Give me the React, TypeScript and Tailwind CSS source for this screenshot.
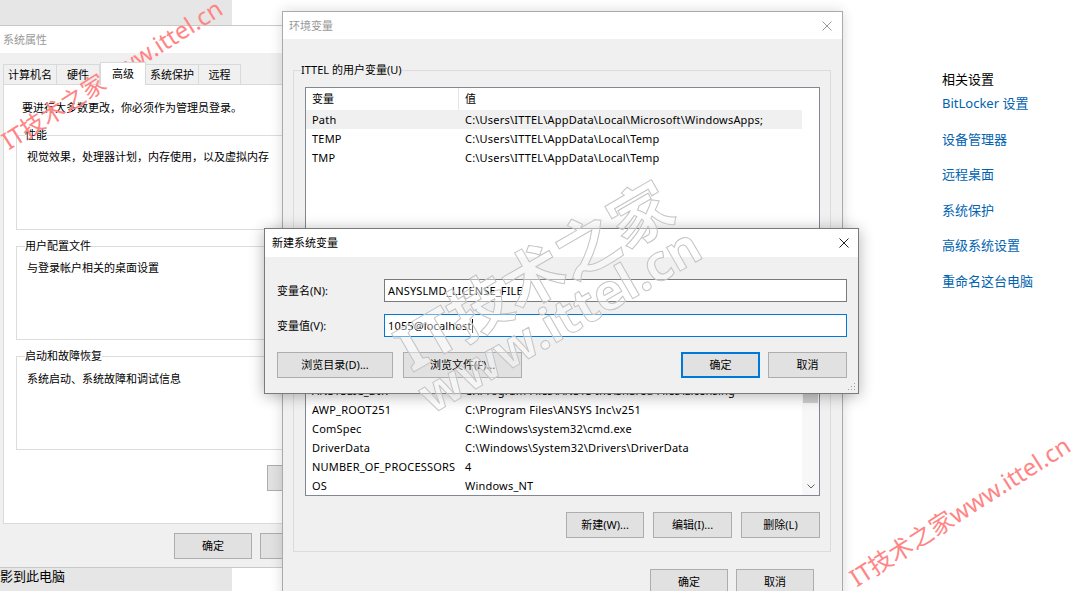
import React from "react";

function XIcon({ color = "#000" }: { color?: string }) {
  return (
    <svg width="10" height="10" viewBox="0 0 10 10">
      <path d="M0.5 0.5 L9.5 9.5 M9.5 0.5 L0.5 9.5" stroke={color} strokeWidth="1" fill="none" />
    </svg>
  );
}

function Btn({ children, className = "", def = false }: { children?: React.ReactNode; className?: string; def?: boolean }) {
  return (
    <div
      className={
        "h-[26px] shrink-0 flex items-center justify-center bg-[#e1e1e1] border whitespace-nowrap " +
        (def ? "border-[#0078d7] shadow-[inset_0_0_0_1px_#0078d7] " : "border-[#adadad] ") +
        className
      }
    >
      {children}
    </div>
  );
}

const links = ["BitLocker 设置", "设备管理器", "远程桌面", "系统保护", "高级系统设置", "重命名这台电脑"];

const userVars = [
  ["Path", "C:\\Users\\ITTEL\\AppData\\Local\\Microsoft\\WindowsApps;"],
  ["TEMP", "C:\\Users\\ITTEL\\AppData\\Local\\Temp"],
  ["TMP", "C:\\Users\\ITTEL\\AppData\\Local\\Temp"],
];

const sysVars = [
  ["ANSYS251_DIR", "C:\\Program Files\\ANSYS Inc\\v251\\ANSYS"],
  ["ANSYSLIC_DIR", "C:\\Program Files\\ANSYS Inc\\Shared Files\\Licensing"],
  ["AWP_ROOT251", "C:\\Program Files\\ANSYS Inc\\v251"],
  ["ComSpec", "C:\\Windows\\system32\\cmd.exe"],
  ["DriverData", "C:\\Windows\\System32\\Drivers\\DriverData"],
  ["NUMBER_OF_PROCESSORS", "4"],
  ["OS", "Windows_NT"],
];

export default function App() {
  return (
    <div className="relative w-[1074px] h-[591px] overflow-hidden bg-white text-[11px] leading-[16px] text-black font-['Noto_Sans','Noto_Sans_CJK_SC',sans-serif]">
      {/* underlying settings page */}
      <div className="absolute inset-0 flex">
        <div className="w-[232px] h-full bg-[#e6e6e6] flex flex-col justify-end pb-[6px]">
          <span className="text-[13px] leading-[18px] whitespace-nowrap">影到此电脑</span>
        </div>
        <div className="flex-1 pl-[710px] pt-[71px] text-[13px] leading-[16px] whitespace-nowrap">
          <div>相关设置</div>
          <div className="mt-[8px] flex flex-col gap-[19.5px] text-[#0063b1]">
            {links.map((l) => (
              <span key={l}>{l}</span>
            ))}
          </div>
        </div>
      </div>

      {/* 系统属性 window */}
      <div className="absolute left-0 top-[25px] w-[432px] h-[543px] flex flex-col border-t border-b border-[#c9c9c9] bg-[#f0f0f0]">
        <div className="h-[27px] shrink-0 bg-white flex items-center pl-[3px] text-[#999]">系统属性</div>
        <div className="flex-1 flex flex-col px-[3px] pt-[9px]">
          <div className="h-[22px] flex items-end">
            <div className="w-[54px] h-[20px] flex items-center justify-center border border-b-0 border-[#d9d9d9]">计算机名</div>
            <div className="w-[43px] h-[20px] flex items-center justify-center border border-b-0 border-l-0 border-[#d9d9d9]">硬件</div>
            <div className="relative top-[1px] z-10 w-[46px] h-[23px] flex items-center justify-center border border-b-0 border-[#d9d9d9] bg-white">高级</div>
            <div className="w-[53px] h-[20px] flex items-center justify-center border border-b-0 border-l-0 border-[#d9d9d9]">系统保护</div>
            <div className="w-[42px] h-[20px] flex items-center justify-center border border-b-0 border-l-0 border-[#d9d9d9]">远程</div>
          </div>
          <div className="h-[440px] bg-white border border-[#d9d9d9] flex flex-col px-[12px] pt-[15px]">
            <div className="ml-[6px] whitespace-nowrap">要进行大多数更改，你必须作为管理员登录。</div>
            <fieldset className="mt-[11px] border border-[#dcdcdc] p-0 min-w-0">
              <legend className="ml-[8px] px-0 leading-[16px]">性能</legend>
              <div className="h-[86px] pt-[6px] pl-[10px] whitespace-nowrap">视觉效果，处理器计划，内存使用，以及虚拟内存</div>
            </fieldset>
            <fieldset className="mt-[8px] border border-[#dcdcdc] p-0 min-w-0">
              <legend className="ml-[8px] px-0 leading-[16px]">用户配置文件</legend>
              <div className="h-[85px] pt-[6px] pl-[10px] whitespace-nowrap">与登录帐户相关的桌面设置</div>
            </fieldset>
            <fieldset className="mt-[8px] border border-[#dcdcdc] p-0 min-w-0">
              <legend className="ml-[8px] px-0 leading-[16px]">启动和故障恢复</legend>
              <div className="h-[85px] pt-[7px] pl-[10px] whitespace-nowrap">系统启动、系统故障和调试信息</div>
            </fieldset>
            <div className="mt-[15px] flex justify-end">
              <Btn className="w-[149px]">环境变量(N)...</Btn>
            </div>
          </div>
          <div className="mt-[9px] flex justify-end gap-[8px] pr-[5px]">
            <Btn className="w-[78px]">确定</Btn>
            <Btn className="w-[78px]">取消</Btn>
            <Btn className="w-[78px]">应用(A)</Btn>
          </div>
        </div>
      </div>

      {/* 环境变量 window */}
      <div className="absolute left-[282px] top-[11px] w-[561px] h-[600px] flex flex-col border border-[#aaaaaa] bg-[#f0f0f0] shadow-[0_0_12px_rgba(0,0,0,0.15)]">
        <div className="h-[27px] shrink-0 bg-white flex items-center justify-between pl-[6px] pr-[10px] text-[#999]">
          <span>环境变量</span>
          <XIcon color="#9a9a9a" />
        </div>
        <div className="flex flex-col pt-[23px]">
          <fieldset className="ml-[10px] mr-[11px] border border-[#dcdcdc] p-0 min-w-0">
            <legend className="ml-[7px] px-0 leading-[16px]">ITTEL 的用户变量(U)</legend>
            <div className="pl-[11px] pr-[10px] pt-[9px] pb-[9px] flex flex-col">
              <div className="h-[150px] border border-[#828790] bg-white flex flex-col">
                <div className="h-[22px] flex shrink-0">
                  <div className="w-[153px] border-r border-[#e5e5e5] pl-[6px] flex items-center">变量</div>
                  <div className="w-[343px] pl-[6px] flex items-center">值</div>
                </div>
                {userVars.map(([n, v], i) => (
                  <div key={n} className={"h-[19px] w-[496px] flex items-center whitespace-nowrap tracking-[0.2px] " + (i === 0 ? "bg-[#f0f0f0]" : "")}>
                    <div className="w-[153px] pl-[6px]">{n}</div>
                    <div className="w-[343px] pl-[6px]">{v}</div>
                  </div>
                ))}
              </div>
              <div className="mt-[9px] flex justify-end gap-[9px]">
                <Btn className="w-[78px]">新建(N)...</Btn>
                <Btn className="w-[78px]">编辑(E)...</Btn>
                <Btn className="w-[78px]">删除(D)</Btn>
              </div>
            </div>
          </fieldset>
          <fieldset className="mt-[8px] ml-[10px] mr-[11px] border border-[#dcdcdc] p-0 min-w-0">
            <legend className="ml-[7px] px-0 leading-[16px]">系统变量(S)</legend>
            <div className="pl-[11px] pr-[10px] pt-[9px] pb-[13px] flex flex-col">
              <div className="h-[181px] border border-[#828790] bg-white flex">
                <div className="w-[496px] flex flex-col">
                  <div className="h-[22px] flex shrink-0">
                    <div className="w-[153px] border-r border-[#e5e5e5] pl-[6px] flex items-center">变量</div>
                    <div className="w-[343px] pl-[6px] flex items-center">值</div>
                  </div>
                  <div className="flex-1 overflow-hidden flex flex-col justify-end">
                    {sysVars.map(([n, v]) => (
                      <div key={n} className="h-[19px] shrink-0 flex items-center whitespace-nowrap tracking-[0.2px]">
                        <div className="w-[153px] pl-[6px]">{n}</div>
                        <div className="w-[343px] pl-[6px]">{v}</div>
                      </div>
                    ))}
                  </div>
                </div>
                <div className="w-[17px] flex flex-col bg-[#f7f7f7]">
                  <div className="h-[17px] flex items-center justify-center">
                    <svg width="8" height="5" viewBox="0 0 8 5"><path d="M0.5 4.5 L4 1 L7.5 4.5" stroke="#606060" fill="none" /></svg>
                  </div>
                  <div className="flex-1 flex flex-col">
                    <div className="mt-[27px] mx-[1px] h-[43px] bg-[#cdcdcd]" />
                  </div>
                  <div className="h-[17px] flex items-center justify-center">
                    <svg width="8" height="5" viewBox="0 0 8 5"><path d="M0.5 0.5 L4 4 L7.5 0.5" stroke="#606060" fill="none" /></svg>
                  </div>
                </div>
              </div>
              <div className="mt-[16px] flex justify-end gap-[9px]">
                <Btn className="w-[78px]">新建(W)...</Btn>
                <Btn className="w-[79px]">编辑(I)...</Btn>
                <Btn className="w-[79px]">删除(L)</Btn>
              </div>
            </div>
          </fieldset>
          <div className="mt-[17px] flex justify-end gap-[8px] pr-[28px]">
            <Btn className="w-[78px]">确定</Btn>
            <Btn className="w-[78px]">取消</Btn>
          </div>
        </div>
      </div>

      {/* 新建系统变量 dialog */}
      <div className="absolute left-[264px] top-[228px] w-[595px] h-[166px] flex flex-col border border-[#7a7a7a] bg-[#f0f0f0] shadow-[0_2px_14px_rgba(0,0,0,0.3)]">
        <div className="h-[28px] shrink-0 bg-white flex items-center justify-between pl-[7px] pr-[9px]">
          <span>新建系统变量</span>
          <XIcon color="#222" />
        </div>
        <div className="relative flex-1 flex flex-col pt-[22px] px-[11px]">
          <div className="h-[23px] flex items-center">
            <div className="w-[108px] pl-[1px]">变量名(N):</div>
            <div className="flex-1 h-[23px] border border-[#7a7a7a] bg-white flex items-center pl-[3px] tracking-[0.15px]">ANSYSLMD_LICENSE_FILE</div>
          </div>
          <div className="mt-[12px] h-[23px] flex items-center">
            <div className="w-[108px] pl-[1px]">变量值(V):</div>
            <div className="flex-1 h-[23px] border border-[#0078d7] bg-white flex items-center pl-[3px] tracking-[0.15px]">
              <span>1055@localhost</span>
              <span className="w-px h-[14px] bg-black" />
            </div>
          </div>
          <div className="mt-[15px] flex">
            <Btn className="ml-[1px] w-[116px]">浏览目录(D)...</Btn>
            <Btn className="ml-[10px] w-[119px]">浏览文件(F)...</Btn>
            <Btn def className="ml-auto w-[79px]">确定</Btn>
            <Btn className="ml-[8px] w-[79px]">取消</Btn>
          </div>
          <svg className="absolute right-[2px] bottom-[2px]" width="8" height="8" viewBox="0 0 8 8">
            <rect x="6" y="0" width="1" height="1" fill="#a0a0a0" />
            <rect x="3" y="3" width="1" height="1" fill="#a0a0a0" />
            <rect x="6" y="3" width="1" height="1" fill="#a0a0a0" />
            <rect x="0" y="6" width="1" height="1" fill="#a0a0a0" />
            <rect x="3" y="6" width="1" height="1" fill="#a0a0a0" />
            <rect x="6" y="6" width="1" height="1" fill="#a0a0a0" />
          </svg>
        </div>
      </div>

      {/* watermarks */}
      <div className="pointer-events-none absolute left-[345px] top-[245px] w-[400px] -rotate-[30deg] flex flex-col items-center font-bold leading-[0.9] text-white/40 [-webkit-text-stroke:1px_#c4c4c4] whitespace-nowrap">
        <span className="text-[62px]">IT技术之家</span>
        <span className="text-[50px]">www.ittel.cn</span>
      </div>
      <div className="pointer-events-none absolute left-[4px] top-[129px] origin-left -rotate-[32.5deg] text-[24px] leading-[28px] text-[#ff8585] whitespace-nowrap">
        IT技术之家www.ittel.cn
      </div>
      <div className="pointer-events-none absolute left-[852px] top-[566px] origin-left -rotate-[32.5deg] text-[24px] leading-[28px] text-[#ff8585] whitespace-nowrap">
        IT技术之家www.ittel.cn
      </div>
    </div>
  );
}
